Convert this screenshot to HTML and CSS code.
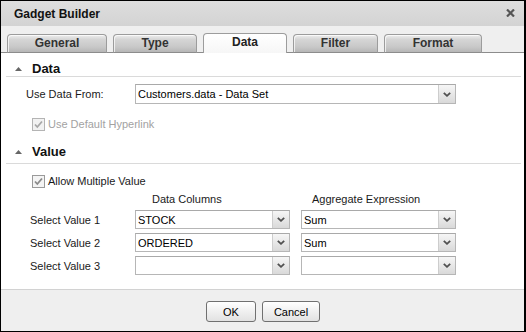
FILE: index.html
```html
<!DOCTYPE html>
<html lang="en">
<head>
    <meta charset="UTF-8">
    <title>Gadget Builder</title>
    <link rel="stylesheet" href="styles.css">
</head>
<body>
    <div class="dialog">
        <div class="titlebar">
            <span class="title">Gadget Builder</span>
            <svg class="close" width="9" height="8" viewBox="0 0 9 8">
                <path d="M1 0.5 L8 7.5 M8 0.5 L1 7.5" stroke="#555" stroke-width="2.2" fill="none"/>
            </svg>
        </div>

        <div class="tabs">
            <div class="tab tab-general">General</div>
            <div class="tab tab-type">Type</div>
            <div class="tab tab-data active">Data</div>
            <div class="tab tab-filter">Filter</div>
            <div class="tab tab-format">Format</div>
        </div>

        <div class="content">
            <div class="section-head">
                <svg class="caret" width="7" height="5" viewBox="0 0 7 5"><path d="M0 5 L3.5 1 L7 5 Z" fill="#666"/></svg>
                Data
            </div>

            <div class="form-row">
                <span class="form-label">Use Data From:</span>
                <div class="combo combo-wide">
                    <span class="combo-text">Customers.data - Data Set</span>
                    <span class="combo-btn"><svg width="8" height="5" viewBox="0 0 8 5"><path d="M0.8 0.8 L4 3.8 L7.2 0.8" stroke="#505050" stroke-width="1.8" fill="none"/></svg></span>
                </div>
            </div>

            <label class="check-row disabled">
                <svg class="check" width="13" height="13" viewBox="0 0 13 13">
                    <rect x="0.5" y="0.5" width="12" height="12" fill="#f2f2f2" stroke="#b4b4b4"/>
                    <path d="M3 6.5 L5.3 9 L10 3.5" stroke="#a8a8a8" stroke-width="1.8" fill="none"/>
                </svg>
                Use Default Hyperlink
            </label>

            <div class="section-head section-value">
                <svg class="caret" width="7" height="5" viewBox="0 0 7 5"><path d="M0 5 L3.5 1 L7 5 Z" fill="#666"/></svg>
                Value
            </div>

            <label class="check-row">
                <svg class="check" width="13" height="13" viewBox="0 0 13 13">
                    <rect x="0.5" y="0.5" width="12" height="12" fill="#f4f4f4" stroke="#9a9a9a"/>
                    <path d="M3 6.5 L5.3 9 L10 3.5" stroke="#8a8a8a" stroke-width="1.8" fill="none"/>
                </svg>
                Allow Multiple Value
            </label>

            <div class="value-grid">
                <div></div>
                <div class="col-head col-data">Data Columns</div>
                <div class="col-head col-agg">Aggregate Expression</div>

                <div class="row-label">Select Value 1</div>
                <div class="combo">
                    <span class="combo-text">STOCK</span>
                    <span class="combo-btn"><svg width="8" height="5" viewBox="0 0 8 5"><path d="M0.8 0.8 L4 3.8 L7.2 0.8" stroke="#505050" stroke-width="1.8" fill="none"/></svg></span>
                </div>
                <div class="combo">
                    <span class="combo-text">Sum</span>
                    <span class="combo-btn"><svg width="8" height="5" viewBox="0 0 8 5"><path d="M0.8 0.8 L4 3.8 L7.2 0.8" stroke="#505050" stroke-width="1.8" fill="none"/></svg></span>
                </div>

                <div class="row-label">Select Value 2</div>
                <div class="combo">
                    <span class="combo-text">ORDERED</span>
                    <span class="combo-btn"><svg width="8" height="5" viewBox="0 0 8 5"><path d="M0.8 0.8 L4 3.8 L7.2 0.8" stroke="#505050" stroke-width="1.8" fill="none"/></svg></span>
                </div>
                <div class="combo">
                    <span class="combo-text">Sum</span>
                    <span class="combo-btn"><svg width="8" height="5" viewBox="0 0 8 5"><path d="M0.8 0.8 L4 3.8 L7.2 0.8" stroke="#505050" stroke-width="1.8" fill="none"/></svg></span>
                </div>

                <div class="row-label">Select Value 3</div>
                <div class="combo">
                    <span class="combo-text"></span>
                    <span class="combo-btn"><svg width="8" height="5" viewBox="0 0 8 5"><path d="M0.8 0.8 L4 3.8 L7.2 0.8" stroke="#505050" stroke-width="1.8" fill="none"/></svg></span>
                </div>
                <div class="combo">
                    <span class="combo-text"></span>
                    <span class="combo-btn"><svg width="8" height="5" viewBox="0 0 8 5"><path d="M0.8 0.8 L4 3.8 L7.2 0.8" stroke="#505050" stroke-width="1.8" fill="none"/></svg></span>
                </div>
            </div>
        </div>

        <div class="footer">
            <button class="btn btn-ok">OK</button>
            <button class="btn btn-cancel">Cancel</button>
        </div>
    </div>
</body>
</html>
```

FILE: styles.css
```css
* {
    margin: 0;
    padding: 0;
    box-sizing: border-box;
}

body {
    font-family: 'Liberation Sans', Arial, sans-serif;
    font-size: 11px;
    color: #1a1a1a;
    background: #fff;
}

.dialog {
    width: 526px;
    height: 332px;
    border: 1px solid #000;
    border-right-width: 2px;
    display: flex;
    flex-direction: column;
    background: #fff;
}

/* title bar */
.titlebar {
    height: 25px;
    flex-shrink: 0;
    display: flex;
    align-items: center;
    justify-content: space-between;
    padding: 0 9px 0 13px;
    background: linear-gradient(#dedede, #d3d3d3);
}

.title {
    font-size: 12px;
    font-weight: 700;
    color: #111;
}

.close {
    display: block;
    margin-top: -1px;
}

/* tabs */
.tabs {
    height: 27px;
    flex-shrink: 0;
    display: flex;
    align-items: flex-end;
    gap: 6px;
    padding-left: 6px;
    background: #efefef;
    border-bottom: 1px solid #8c8c8c;
}

.tab {
    height: 19px;
    margin-bottom: -1px;
    border: 1px solid #9c9c9c;
    border-bottom-color: #8c8c8c;
    border-radius: 4px 4px 0 0;
    background: linear-gradient(#eeeeee 0%, #d6d6d6 25%, #c8c8c8 70%, #b6b6b6 100%);
    box-shadow: inset 1px 1px 0 rgba(255, 255, 255, 0.7);
    font-size: 12px;
    font-weight: 700;
    color: #333;
    text-align: center;
    line-height: 17px;
}

.tab.active {
    height: 20px;
    background: linear-gradient(#ffffff, #f6f6f6);
    border-bottom: none;
    box-shadow: none;
    color: #222;
}

.tab-general { width: 100px; }
.tab-type { width: 84px; }
.tab-data { width: 84px; }
.tab-filter { width: 85px; }
.tab-format { width: 98px; }

/* content */
.content {
    flex: 1;
    padding: 8px 3px 0 5px;
}

.section-head {
    height: 16px;
    display: flex;
    align-items: center;
    padding-left: 9px;
    border-bottom: 1px solid #dadada;
    font-size: 13px;
    font-weight: 700;
    color: #111;
}

.caret {
    margin-right: 10px;
    margin-top: -1px;
}

.section-value {
    height: 20px;
    margin-top: 10px;
    padding-bottom: 4px;
}

.form-row {
    display: flex;
    align-items: center;
    height: 20px;
    margin-top: 7px;
    padding-left: 20px;
}

.form-label {
    width: 109px;
}

.combo {
    height: 19px;
    display: flex;
    border: 1px solid #b6b6b6;
    border-top-color: #a9a9a9;
    background: #fff;
}

.combo-wide {
    width: 321px;
    height: 20px;
}

.combo-text {
    flex: 1;
    padding-left: 2px;
    display: flex;
    align-items: center;
    font-size: 11px;
    color: #000;
}

.combo-btn {
    width: 17px;
    display: flex;
    align-items: center;
    justify-content: center;
    border-left: 1px solid #cdcdcd;
    background: linear-gradient(#f6f6f6, #d9d9d9);
}

.check-row {
    display: flex;
    align-items: center;
    gap: 3px;
    height: 20px;
    margin-top: 10px;
    padding-left: 26px;
}

.check-row.disabled {
    color: #a2a2a2;
}

.section-value + .check-row {
    margin-top: 7px;
}

.value-grid {
    display: grid;
    grid-template-columns: 94px 155px 155px;
    grid-template-rows: 13px 19px 19px 19px;
    column-gap: 11px;
    row-gap: 4px;
    margin-top: 2px;
    padding-left: 24px;
}

.col-head {
    line-height: 13px;
}

.col-data {
    padding-left: 17px;
}

.col-agg {
    padding-left: 11px;
}

.row-label {
    display: flex;
    align-items: center;
}

/* footer */
.footer {
    height: 42px;
    flex-shrink: 0;
    display: flex;
    justify-content: center;
    align-items: flex-start;
    gap: 6px;
    padding-top: 11px;
    padding-left: 1px;
    background: #efefef;
    border-top: 1px solid #d2d2d2;
}

.btn {
    height: 21px;
    border: 1px solid #707070;
    border-radius: 3px;
    background: linear-gradient(#ffffff, #f0f0f0 50%, #e2e2e2);
    font-family: 'Liberation Sans', Arial, sans-serif;
    font-size: 11px;
    color: #000;
}

.btn-ok { width: 50px; }
.btn-cancel { width: 58px; }
```
